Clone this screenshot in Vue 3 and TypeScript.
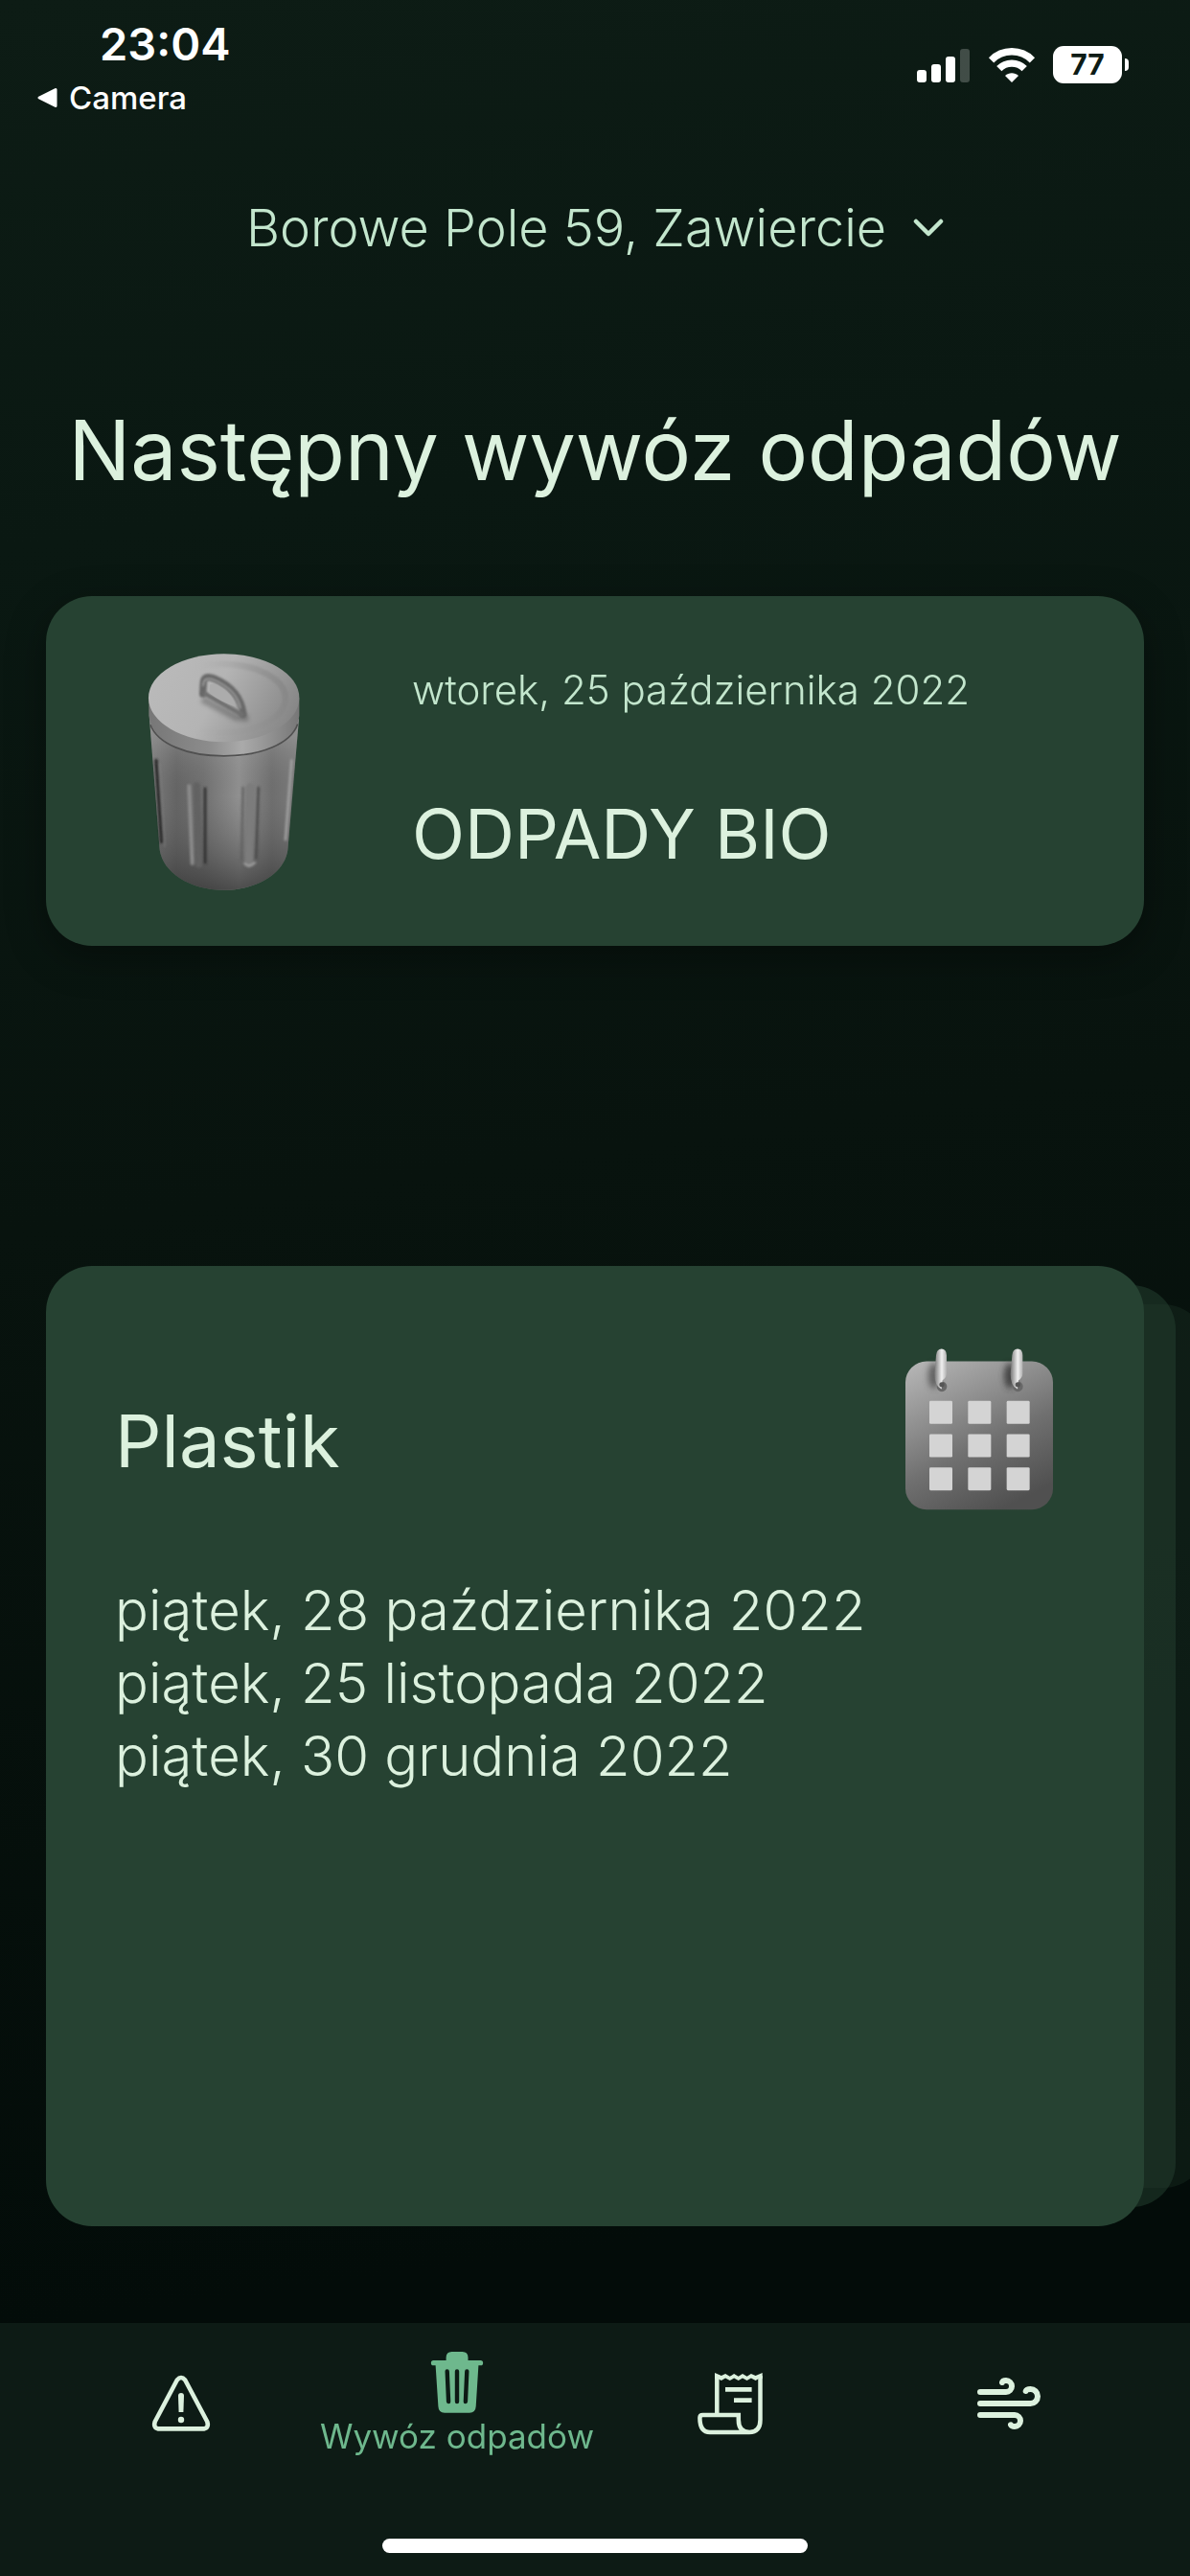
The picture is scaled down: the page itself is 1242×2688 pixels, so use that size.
<script setup lang="ts">
import { ref } from 'vue'

interface NavItem {
  id: string
  label: string
}

const address = 'Borowe Pole 59, Zawiercie'
const nextPickup = { date: 'wtorek, 25 października 2022', kind: 'ODPADY BIO' }
const schedule = {
  kind: 'Plastik',
  dates: [
    'piątek, 28 października 2022',
    'piątek, 25 listopada 2022',
    'piątek, 30 grudnia 2022',
  ],
}
const navItems: NavItem[] = [
  { id: 'alerts', label: 'Ostrzeżenia' },
  { id: 'waste', label: 'Wywóz odpadów' },
  { id: 'bills', label: 'Rachunki' },
  { id: 'air', label: 'Powietrze' },
]
const active = ref('waste')
const cells = [0, 1, 2].flatMap((row) =>
  [0, 1, 2].map((col) => ({ x: 268 + col * 121, y: 515 + row * 104 })),
)
</script>

<template>
  <div class="screen">
    <header class="status">
      <div class="status-left">
        <time class="clock">23:04</time>
        <a class="back" href="#camera">
          <svg width="22" height="22" viewBox="0 0 22 22" aria-hidden="true">
            <path d="M3 11 20 2.500V19.500Z" fill="#fff" stroke="#fff" stroke-width="3" stroke-linejoin="round" />
          </svg>
          <span>Camera</span>
        </a>
      </div>
      <div class="status-right">
        <svg width="56" height="36" viewBox="0 0 56 36" aria-hidden="true">
          <g fill="#fff">
            <rect x="0" y="23" width="10" height="13" rx="3" />
            <rect x="15" y="17" width="10" height="19" rx="3" />
            <rect x="30" y="9" width="10" height="27" rx="3" />
            <rect x="45" y="1" width="10" height="35" rx="3" opacity="0.22" />
          </g>
        </svg>
        <svg width="50" height="38" viewBox="0 0 50 38" aria-hidden="true">
          <g fill="none" stroke="#fff" stroke-width="7.4">
            <path d="M3.6 13.8A30 30 0 0 1 46.4 13.8" />
            <path d="M11.8 22.6A18.6 18.6 0 0 1 38.2 22.6" />
          </g>
          <path d="M25 37 18 30C22 26.300 28 26.300 32 30Z" fill="#fff" />
        </svg>
        <div class="battery"><span class="level">77</span></div>
      </div>
    </header>

    <main class="content">
      <button class="address" type="button">
        <span>{{ address }}</span>
        <svg width="32" height="20" viewBox="0 0 32 20" aria-hidden="true">
          <path d="M3 3 16 16 29 3" fill="none" stroke="currentColor" stroke-width="4.500" stroke-linecap="round" stroke-linejoin="round" />
        </svg>
      </button>

      <h1 class="title">Następny wywóz odpadów</h1>

      <section class="card next">
        <svg class="bin" viewBox="374 240 480 752" aria-hidden="true">
          <defs>
            <linearGradient id="binBody" x1="0" x2="1" y1="0" y2="0">
              <stop offset="0" stop-color="#7c7c7c" />
              <stop offset="0.18" stop-color="#646464" />
              <stop offset="0.36" stop-color="#707070" />
              <stop offset="0.6" stop-color="#909090" />
              <stop offset="0.82" stop-color="#6e6e6e" />
              <stop offset="1" stop-color="#7c7c7c" />
            </linearGradient>
            <linearGradient id="binShade" x1="0" x2="0" y1="0" y2="1">
              <stop offset="0.1" stop-color="#bbb" stop-opacity="0.3" />
              <stop offset="0.45" stop-color="#666" stop-opacity="0" />
              <stop offset="1" stop-color="#303030" stop-opacity="0.7" />
            </linearGradient>
            <linearGradient id="binLid" x1="0" x2="1" y1="0.3" y2="0.6">
              <stop offset="0" stop-color="#bababa" />
              <stop offset="0.45" stop-color="#b4b4b4" />
              <stop offset="1" stop-color="#868686" />
            </linearGradient>
            <linearGradient id="binRim" x1="0" x2="1" y1="0" y2="0">
              <stop offset="0" stop-color="#777" />
              <stop offset="0.4" stop-color="#8c8c8c" />
              <stop offset="0.62" stop-color="#aaa" />
              <stop offset="1" stop-color="#777" />
            </linearGradient>
            <linearGradient id="binRing" x1="0" x2="1" y1="0" y2="0">
              <stop offset="0.3" stop-color="#aaa" stop-opacity="0" />
              <stop offset="1" stop-color="#888" />
            </linearGradient>
            <filter id="soft" x="-50%" y="-20%" width="200%" height="140%">
              <feGaussianBlur stdDeviation="3" />
            </filter>
            <filter id="softer" x="-50%" y="-50%" width="200%" height="200%">
              <feGaussianBlur stdDeviation="7" />
            </filter>
          </defs>
          <path d="M380 450 412 860C422 930 505 986 613 986S804 930 813 860L848 450Z" fill="url(#binBody)" />
          <path d="M380 450 412 860C422 930 505 986 613 986S804 930 813 860L848 450Z" fill="url(#binShade)" />
          <g filter="url(#soft)" fill="none" stroke-linecap="round">
            <path d="M401 580 418 835" stroke="#282828" stroke-width="10" />
            <path d="M411 590 428 850" stroke="#999" stroke-width="4" opacity="0.4" />
            <path d="M504 660 514 902" stroke="#8c8c8c" stroke-width="12" />
            <path d="M528 660 535 905" stroke="#626262" stroke-width="22" />
            <path d="M554 668 554 900" stroke="#2d2d2d" stroke-width="8" />
            <path d="M673 665 668 890" stroke="#626262" stroke-width="7" />
            <path d="M696 665 691 900" stroke="#7c7c7c" stroke-width="28" />
            <path d="M721 665 714 885" stroke="#484848" stroke-width="7" />
            <path d="M678 903Q693 918 710 900" stroke="#a0a0a0" stroke-width="7" />
            <path d="M825 580 806 828" stroke="#a2a2a2" stroke-width="8" />
          </g>
          <path d="M378 385V440C385 515 485 570 613 570S842 515 849 440V385Z" fill="url(#binRim)" />
          <path d="M383 468C405 527 495 566 613 566S823 527 844 466" fill="none" stroke="#505050" stroke-width="5" />
          <ellipse cx="613" cy="384" rx="236" ry="138" fill="url(#binLid)" />
          <ellipse cx="606" cy="386" rx="200" ry="108" fill="none" stroke="url(#binRing)" stroke-width="20" filter="url(#soft)" />
          <path d="M545 388 650 445 690 448" fill="none" stroke="#555" stroke-width="22" opacity="0.45" filter="url(#softer)" />
          <path d="M547 372 549 336Q551 310 583 324C640 348 668 386 674 436" fill="none" stroke="#686868" stroke-width="22" stroke-linecap="round" stroke-linejoin="round" filter="url(#soft)" />
          <path d="M556 372 668 436" fill="none" stroke="#707070" stroke-width="14" stroke-linecap="round" filter="url(#soft)" />
          <path d="M548 345Q550 316 582 328C632 350 658 382 664 415" fill="none" stroke="#949494" stroke-width="7" stroke-linecap="round" filter="url(#soft)" />
          <path d="M569 344Q578 336 594 346C628 364 646 386 650 412Q605 398 568 370Z" fill="#acacac" />
        </svg>
        <div class="next-text">
          <p class="next-date">{{ nextPickup.date }}</p>
          <h2 class="kind">{{ nextPickup.kind }}</h2>
        </div>
      </section>

      <section class="deck">
        <div class="layer layer-third"></div>
        <div class="layer layer-second"></div>
        <article class="card front">
          <div class="front-head">
            <h2 class="kind front-kind">{{ schedule.kind }}</h2>
            <svg class="calendar" viewBox="190 345 468 515" aria-hidden="true">
              <defs>
                <linearGradient id="calBody" x1="0.15" x2="0.65" y1="0" y2="1">
                  <stop offset="0" stop-color="#b2b2b2" />
                  <stop offset="0.35" stop-color="#8c8c8c" />
                  <stop offset="0.6" stop-color="#707070" />
                  <stop offset="1" stop-color="#505050" />
                </linearGradient>
                <linearGradient id="ring" x1="0" x2="1" y1="0" y2="0">
                  <stop offset="0" stop-color="#777" />
                  <stop offset="0.6" stop-color="#f0f0f0" />
                  <stop offset="1" stop-color="#b0b0b0" />
                </linearGradient>
                <filter id="calSoft" x="-80%" y="-40%" width="260%" height="180%">
                  <feGaussianBlur stdDeviation="9" />
                </filter>
              </defs>
              <rect x="193" y="391" width="462" height="464" rx="66" fill="url(#calBody)" />
              <ellipse cx="282" cy="436" rx="18" ry="40" fill="#444" opacity="0.7" filter="url(#calSoft)" />
              <ellipse cx="520" cy="436" rx="18" ry="40" fill="#333" opacity="0.8" filter="url(#calSoft)" />
              <g v-for="dx in [0, 238]" :key="dx" :transform="`translate(${dx} 0)`">
                <circle cx="307" cy="470" r="16" fill="#686868" />
                <path d="M289 372Q291 352 306 352T322 372V428Q322 444 309 450L306 478Q284 470 284 430Z" fill="url(#ring)" />
                <circle cx="307" cy="464" r="8" fill="#555" />
              </g>
              <rect v-for="c in cells" :key="`${c.x}-${c.y}`" :x="c.x" :y="c.y" width="72" height="72" rx="4" fill="#d4d4d4" />
            </svg>
          </div>
          <ul class="dates">
            <li v-for="d in schedule.dates" :key="d">{{ d }}</li>
          </ul>
        </article>
      </section>
    </main>

    <footer class="footer">
      <nav class="nav">
        <a
          v-for="item in navItems"
          :key="item.id"
          class="nav-item"
          :class="{ active: active === item.id }"
          :href="`#${item.id}`"
          :aria-label="item.label"
          @click.prevent="active = item.id"
        >
          <svg v-if="item.id === 'alerts'" width="66" height="64" viewBox="0 0 66 64" fill="none" stroke="currentColor" stroke-width="4.600">
            <path d="M28.800 7.500Q33 2.500 37.200 7.500L60.300 51Q62.500 58.400 55 58.400H11Q3.500 58.400 5.700 51Z" stroke-linejoin="round" />
            <path d="M30 24A3 3 0 0 1 36 24L35.400 41H30.600Z" fill="currentColor" stroke="none" />
            <circle cx="33" cy="49" r="3.200" fill="currentColor" stroke="none" />
          </svg>
          <svg v-else-if="item.id === 'waste'" width="58" height="68" viewBox="0 0 58 68">
            <path fill="currentColor" d="M4.500 11H17.600V8Q17.600 2 23.600 2H34.500Q40.500 2 40.500 8V11H53.500A2.600 2.600 0 0 1 53.500 16.300H51.400L48.700 59Q48.300 65.700 42 65.700H16Q9.800 65.700 9.400 59L6.600 16.300H4.500A2.600 2.600 0 0 1 4.500 11Z" />
            <path class="slots" d="M18.700 22.500 20.100 54M29 22.500V54M39.300 22.500 37.900 54" fill="none" stroke-width="4.400" stroke-linecap="round" />
          </svg>
          <svg v-else-if="item.id === 'bills'" width="78" height="70" viewBox="0 0 78 70" fill="none" stroke="currentColor" stroke-width="4.500">
            <path d="M22.300 46V6M67.500 6V52Q67.500 65 56 65H15Q4.400 65 4.400 50Q4.400 47 7.500 47H44.800V52Q44.800 65 56.500 65" />
            <path d="M20 3 26.900 6 31.100 4 35.800 6.800 40.100 4 44.700 6.800 49 4 53.600 6.800 57.900 4 62.600 6 69.700 3V9H66L62.600 11 57.900 8.500 53.600 11 49 8.500 44.700 11 40.100 8.500 35.800 11 31.100 8.500 26.900 11 23 9H20Z" fill="currentColor" stroke="none" />
            <path d="M31 20.300H58.600M40 31.700H58.600" stroke-width="4.700" />
          </svg>
          <svg v-else width="72" height="60" viewBox="0 0 72 60" fill="none" stroke="currentColor" stroke-width="6" stroke-linecap="round" stroke-linejoin="round">
            <path d="M6 18H33A6 6 0 0 0 33 6Q29.500 6 29 8" />
            <path d="M6 30H58.500A7.500 7.500 0 0 0 58.500 15Q54.500 15 53.700 17" />
            <path d="M6 42H42A6 6 0 0 1 42 54Q38.800 54 38 52.300" />
          </svg>
          <span v-if="active === item.id" class="nav-label">{{ item.label }}</span>
        </a>
      </nav>
      <div class="home-bar"></div>
    </footer>
  </div>
</template>

<style>
body {
  background: #030c09;
}
</style>

<style scoped>
.screen {
  --card: #264232;
  --bar: #0d1b15;
  --mint: #dcf1de;
  --mint-soft: #c3e6cd;
  --accent: #6eb88d;
  box-sizing: border-box;
  display: flex;
  flex-direction: column;
  min-height: 100vh;
  overflow: hidden;
  color: var(--mint);
  background: linear-gradient(172deg, #0d1c15 0%, #0a1812 20%, #08130e 45%, #030c09 85%);
  font-family: Inter, "Noto Sans", sans-serif;
}

h1,
h2,
p,
ul {
  margin: 0;
  padding: 0;
  font-weight: 400;
}

.status {
  display: flex;
  justify-content: space-between;
  align-items: flex-start;
  padding: 18px 71px 0 38px;
  color: #fff;
}

.status-left {
  display: flex;
  flex-direction: column;
}

.clock {
  padding-left: 66px;
  font-size: 47px;
  line-height: 56px;
  font-weight: 600;
}

.back {
  display: flex;
  align-items: center;
  gap: 12px;
  height: 56px;
  color: #fff;
  font-size: 33px;
  line-height: 40px;
  font-weight: 500;
  text-decoration: none;
}

.status-right {
  display: flex;
  align-items: center;
  gap: 18px;
  padding-top: 30px;
}

.battery {
  position: relative;
  width: 72px;
  height: 39px;
  border-radius: 11px;
  background: #fff;
  color: var(--bar);
  font-size: 30px;
  line-height: 39px;
  font-weight: 700;
  text-align: center;
}

.battery::after {
  content: "";
  position: absolute;
  top: 13px;
  right: -7px;
  width: 4px;
  height: 13px;
  border-radius: 0 4px 4px 0;
  background: #fff;
}

.content {
  flex: 1;
  display: flex;
  flex-direction: column;
  padding: 0 48px 101px;
}

.address {
  display: flex;
  justify-content: center;
  align-items: center;
  gap: 28px;
  align-self: center;
  margin-top: 78px;
  padding: 0;
  border: 0;
  background: none;
  color: var(--mint-soft);
  font-family: inherit;
  font-size: 54px;
  line-height: 60px;
  font-weight: 300;
}

.title {
  margin-top: 146px;
  font-size: 86px;
  line-height: 112px;
  text-align: center;
  white-space: nowrap;
}

.card {
  border-radius: 48px;
  background: var(--card);
}

.next {
  display: flex;
  align-items: center;
  gap: 116px;
  margin-top: 96px;
  padding: 58px 64px 56px 106px;
  box-shadow: 0 12px 40px rgba(0, 0, 0, 0.35);
}

.bin {
  flex: none;
  width: 160px;
  height: 251px;
}

.next-text {
  display: flex;
  flex-direction: column;
  gap: 76px;
  padding-bottom: 8px;
}

.next-date {
  color: var(--mint-soft);
  font-size: 42px;
  line-height: 60px;
  font-weight: 300;
}

.kind {
  font-size: 72px;
  line-height: 88px;
}

.deck {
  position: relative;
  flex: 1;
  display: flex;
  margin-top: 334px;
}

.layer {
  position: absolute;
  border-radius: 46px;
  background: var(--card);
}

.layer-second {
  inset: 20px -33px 20px 33px;
  opacity: 0.5;
}

.layer-third {
  inset: 40px -66px 40px 66px;
  opacity: 0.25;
}

.front {
  position: relative;
  flex: 1;
  padding: 84px 94px 64px 72px;
}

.front-head {
  display: flex;
  justify-content: space-between;
  align-items: center;
}

.front-kind {
  padding-top: 24px;
  font-size: 76px;
}

.calendar {
  width: 156px;
  height: 172px;
}

.dates {
  margin-top: 65px;
  list-style: none;
  font-size: 58px;
  line-height: 76px;
  font-weight: 300;
}

.footer {
  display: flex;
  flex-direction: column;
  align-items: center;
  background: var(--bar);
}

.nav {
  display: flex;
  box-sizing: border-box;
  width: 100%;
  height: 168px;
  padding: 0 45px;
}

.nav-item {
  flex: 1;
  display: flex;
  flex-direction: column;
  align-items: center;
  justify-content: center;
  color: var(--mint);
  text-decoration: none;
  white-space: nowrap;
}

.nav-item.active {
  color: var(--accent);
}

.slots {
  stroke: var(--bar);
}

.nav-label {
  font-size: 35px;
  line-height: 44px;
  font-weight: 400;
}

.home-bar {
  width: 444px;
  max-width: 60%;
  height: 15px;
  margin: 57px 0 24px;
  border-radius: 8px;
  background: #fff;
}
</style>
